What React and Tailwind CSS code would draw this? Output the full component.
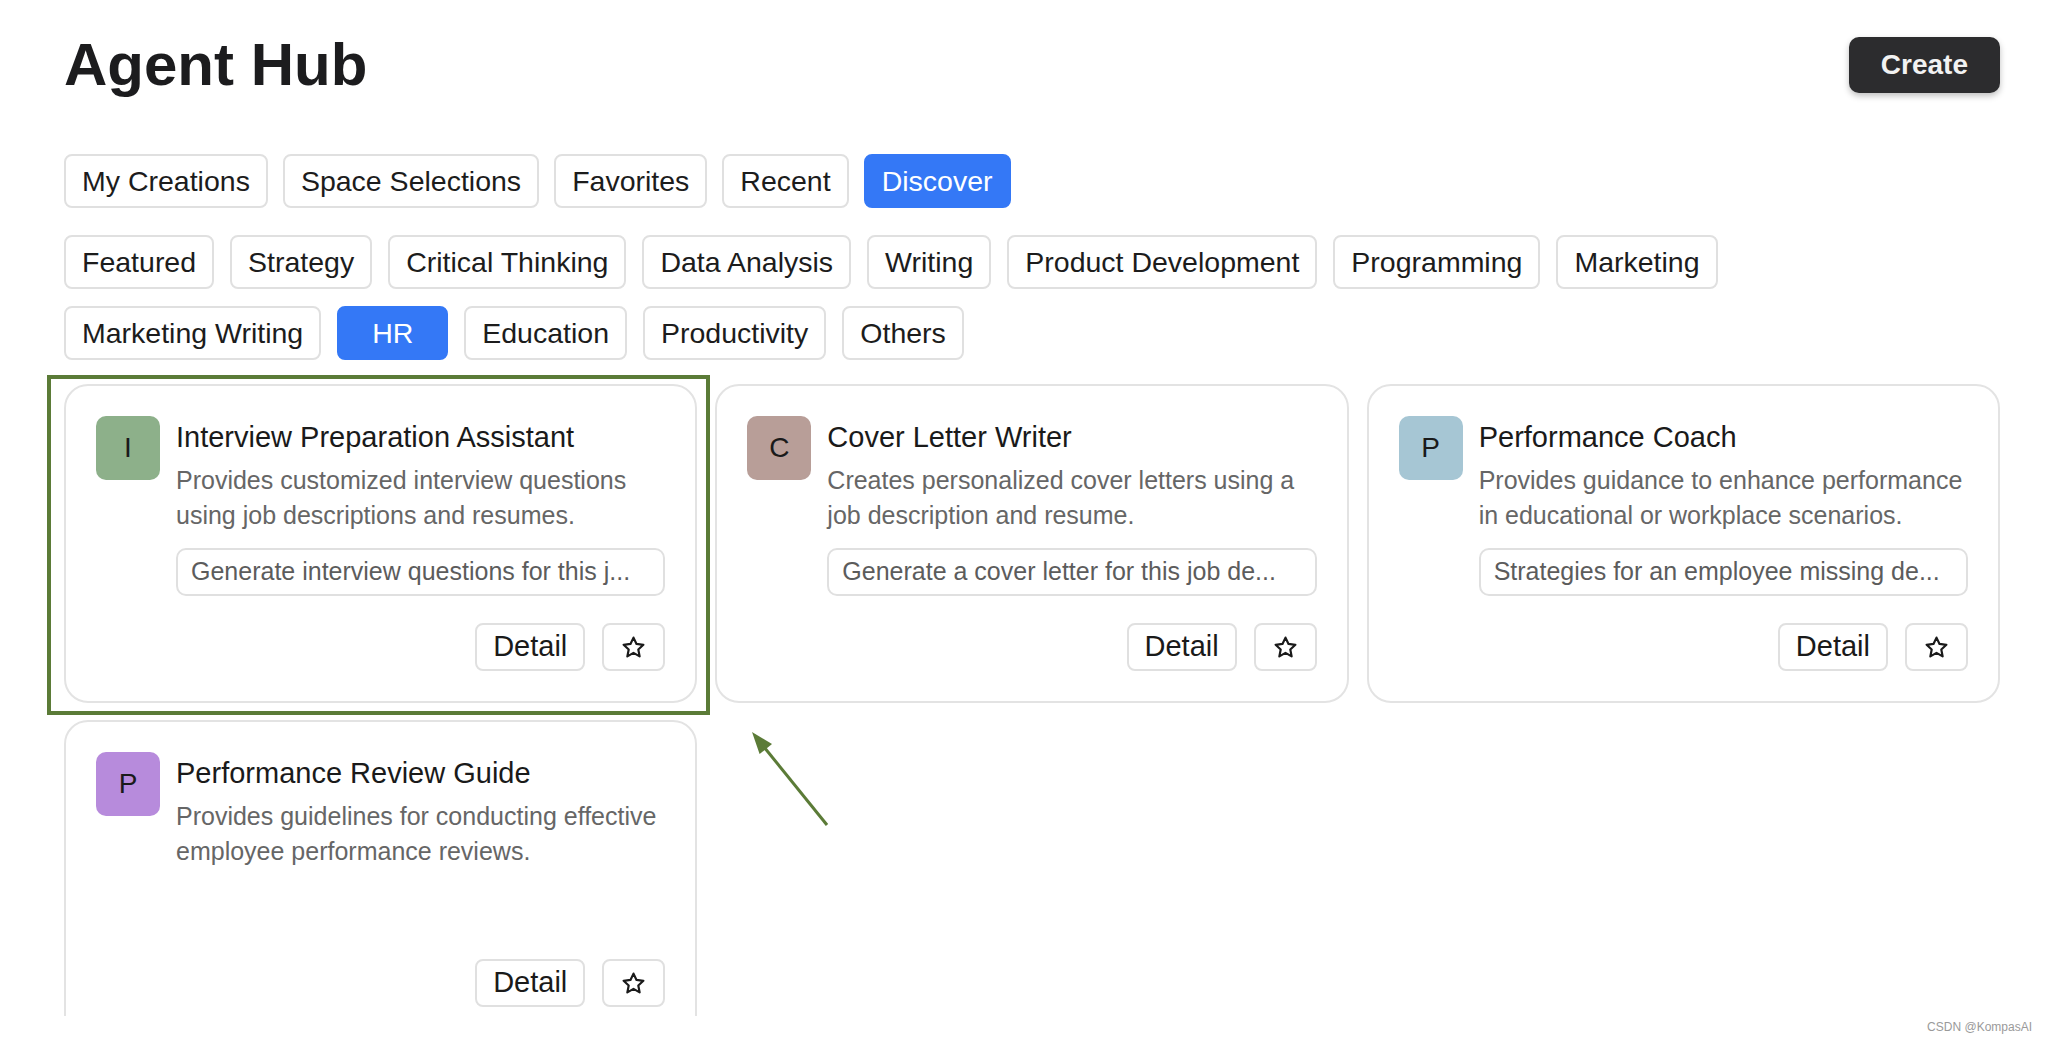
import React from "react";

const navTabs = ["My Creations", "Space Selections", "Favorites", "Recent", "Discover"];
const categoryRows = [
  [
    "Featured",
    "Strategy",
    "Critical Thinking",
    "Data Analysis",
    "Writing",
    "Product Development",
    "Programming",
    "Marketing",
  ],
  ["Marketing Writing", "HR", "Education", "Productivity", "Others"],
];

const agents = [
  {
    letter: "I",
    color: "bg-[#8db08a]",
    title: "Interview Preparation Assistant",
    desc: "Provides customized interview questions using job descriptions and resumes.",
    prompt: "Generate interview questions for this j...",
    marked: true,
  },
  {
    letter: "C",
    color: "bg-[#b89e98]",
    title: "Cover Letter Writer",
    desc: "Creates personalized cover letters using a job description and resume.",
    prompt: "Generate a cover letter for this job de...",
  },
  {
    letter: "P",
    color: "bg-[#a6c6d4]",
    title: "Performance Coach",
    desc: "Provides guidance to enhance performance in educational or workplace scenarios.",
    prompt: "Strategies for an employee missing de...",
  },
  {
    letter: "P",
    color: "bg-[#b78bdc]",
    title: "Performance Review Guide",
    desc: "Provides guidelines for conducting effective employee performance reviews.",
  },
];

const StarIcon = () => (
  <svg width="25" height="25" viewBox="0 0 24 24" fill="none">
    <polygon
      points="12,2.5 14.9,8.6 21.5,9.4 16.6,13.9 17.9,20.5 12,17.2 6.1,20.5 7.4,13.9 2.5,9.4 9.1,8.6"
      stroke="#1a1a1a"
      strokeWidth="2.1"
      strokeLinejoin="round"
    />
  </svg>
);

const Tab = ({ label, active }) => (
  <button
    className={`h-[54px] min-w-[111px] px-4 border-2 rounded-lg text-[28.5px] flex items-center justify-center whitespace-nowrap ${
      active
        ? "bg-[#3478f6] border-[#3478f6] text-white"
        : "bg-white border-[#e0e0e0] text-[#1c1c1c]"
    }`}
  >
    {label}
  </button>
);

const AgentCard = ({ agent }) => (
  <div className="relative">
    <div className="h-[319px] border-2 border-[#e3e3e3] rounded-3xl bg-white p-[30px] flex">
      <div
        className={`w-16 h-16 shrink-0 rounded-[10px] ${agent.color} flex items-center justify-center text-[28px] text-[#1a1a1a]`}
      >
        {agent.letter}
      </div>
      <div className="ml-4 flex-1 min-w-0 flex flex-col">
        <div className="text-[29px] leading-[42px] text-[#1a1a1a] whitespace-nowrap">
          {agent.title}
        </div>
        <p className="mt-[5px] text-[25px] leading-[35px] text-[#666666]">{agent.desc}</p>
        {agent.prompt && (
          <div className="mt-[15px] h-[48px] border-2 border-[#e0e0e0] rounded-[10px] px-[13px] flex items-center text-[25px] text-[#5c5c5c] whitespace-nowrap overflow-hidden">
            {agent.prompt}
          </div>
        )}
        <div className="mt-auto flex justify-end gap-[17px]">
          <button className="h-[48px] px-4 border-2 border-[#e0e0e0] rounded-lg text-[29px] text-[#1a1a1a] flex items-center">
            Detail
          </button>
          <button className="h-[48px] w-[63px] border-2 border-[#e0e0e0] rounded-lg flex items-center justify-center">
            <StarIcon />
          </button>
        </div>
      </div>
    </div>
    {agent.marked && (
      <div className="absolute -left-[17px] -top-[9px] w-[663px] h-[340px] border-4 border-[#5b7b37] pointer-events-none" />
    )}
  </div>
);

export default function App() {
  return (
    <div
      className="relative h-[1048px] w-[2056px] bg-white overflow-hidden"
      style={{ fontFamily: '"Liberation Sans", Arial, sans-serif' }}
    >
      <div className="relative h-[1016px] overflow-hidden pl-16 pr-14">
        <div className="pt-[35px] flex items-center justify-between">
          <h1 className="text-[60px] leading-none font-bold text-[#1c1c1e]">Agent Hub</h1>
          <button className="h-14 px-8 rounded-[10px] bg-[#2c2c2e] text-[#f2f2f2] text-[28px] font-bold shadow-[0_3px_6px_rgba(0,0,0,0.25)]">
            Create
          </button>
        </div>

        <div className="mt-[59px] flex gap-[15px]">
          {navTabs.map((t) => (
            <Tab key={t} label={t} active={t === "Discover"} />
          ))}
        </div>

        <div className="mt-[27px] flex flex-col gap-[17px]">
          {categoryRows.map((row, r) => (
            <div key={r} className="flex gap-4">
              {row.map((c) => (
                <Tab key={c} label={c} active={c === "HR"} />
              ))}
            </div>
          ))}
        </div>

        <div className="mt-6 grid grid-cols-3 gap-x-[18px] gap-y-[17px]">
          {agents.map((a, i) => (
            <AgentCard key={i} agent={a} />
          ))}
        </div>

        <svg
          className="absolute left-[740px] top-[720px] pointer-events-none"
          width="100"
          height="115"
          viewBox="0 0 100 115"
        >
          <line x1="87" y1="105" x2="24" y2="27" stroke="#5b7b37" strokeWidth="3" />
          <polygon points="12,12 32,24.1 19.6,34.1" fill="#5b7b37" />
        </svg>
      </div>

      <div className="absolute right-[24px] bottom-[12px] text-[12px] text-[#9a9a9a]">
        CSDN @KompasAI
      </div>
    </div>
  );
}
